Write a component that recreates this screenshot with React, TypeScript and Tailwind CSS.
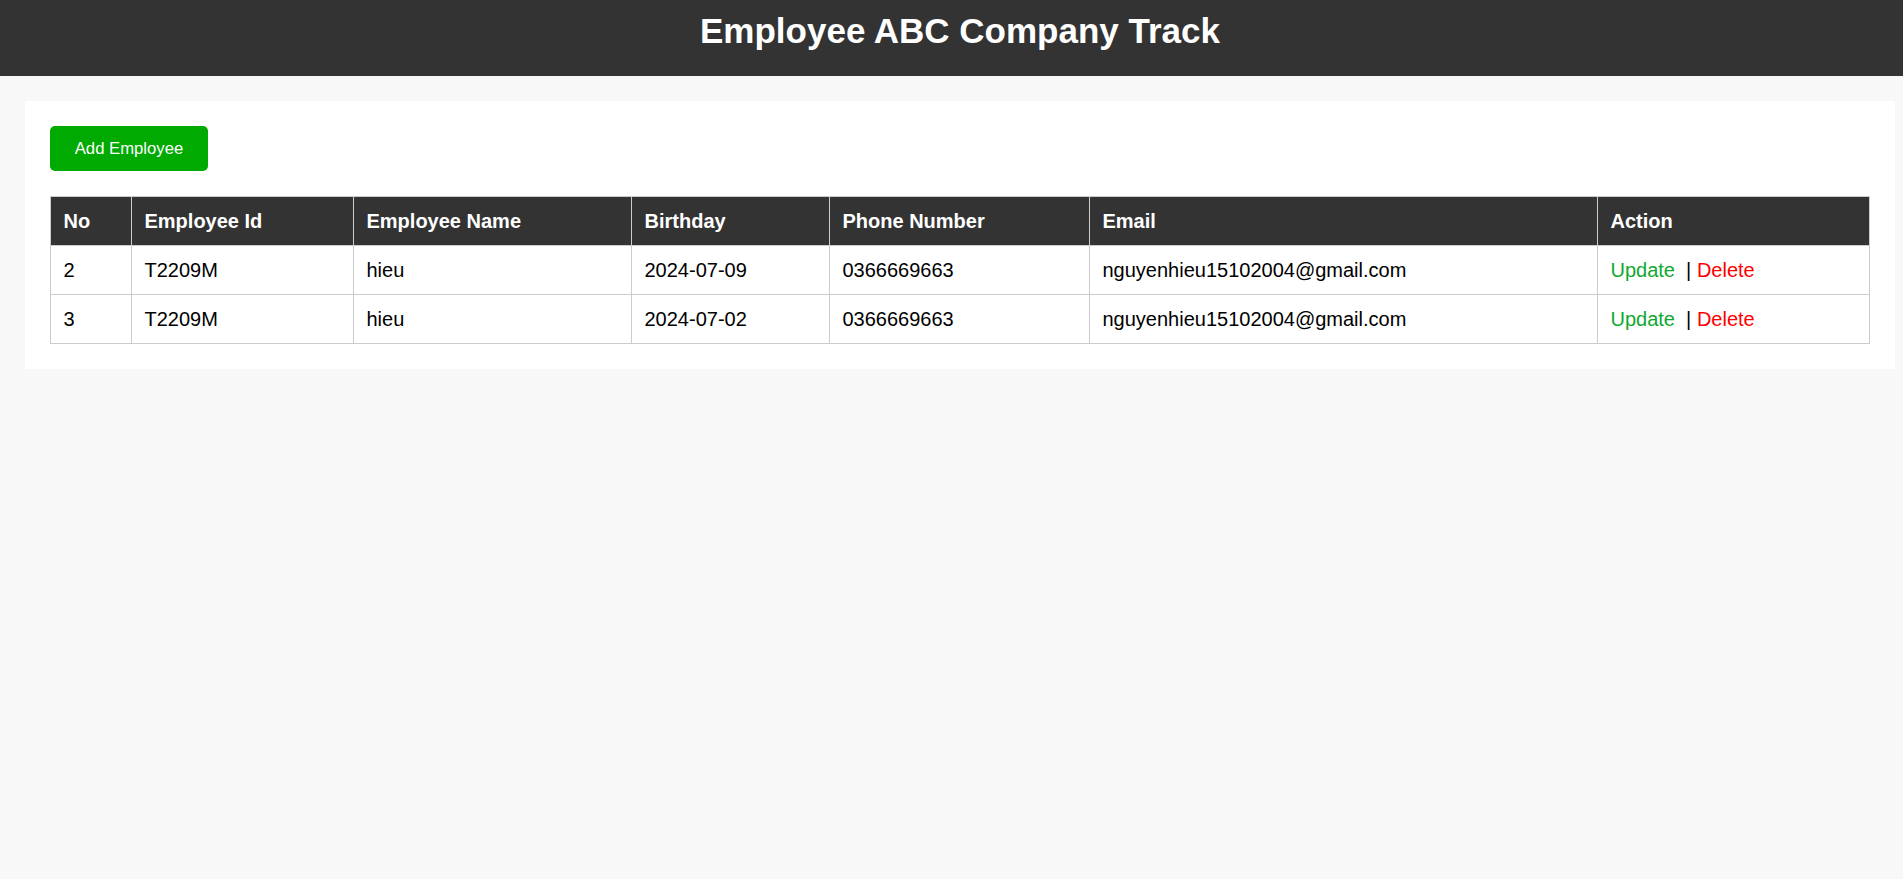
import React from 'react';

type Employee = {
  no: number;
  id: string;
  name: string;
  birthday: string;
  phone: string;
  email: string;
};

const employees: Employee[] = [
  {no: 2, id: 'T2209M', name: 'hieu', birthday: '2024-07-09', phone: '0366669663', email: 'nguyenhieu15102004@gmail.com'},
  {no: 3, id: 'T2209M', name: 'hieu', birthday: '2024-07-02', phone: '0366669663', email: 'nguyenhieu15102004@gmail.com'},
];

const columns = [
  {label: 'No', w: 'w-[81px]'},
  {label: 'Employee Id', w: 'w-[222px]'},
  {label: 'Employee Name', w: 'w-[278px]'},
  {label: 'Birthday', w: 'w-[198px]'},
  {label: 'Phone Number', w: 'w-[260px]'},
  {label: 'Email', w: 'w-[508px]'},
  {label: 'Action', w: 'w-[272px]'},
];

const cell = 'border border-[#cccccc] px-[12.5px] py-[12.5px] text-left leading-[23px]';

export default function App() {
  return (
    <div className="min-h-screen bg-[#f8f8f8] font-['Liberation_Sans',Arial,sans-serif] text-[20px] text-black">
      <header className="h-[76px] bg-[#333333] pl-[17px] pt-[11px] text-center">
        <h1 className="text-[35px] font-bold leading-[40px] text-white">Employee ABC Company Track</h1>
      </header>

      <main className="ml-[25px] mt-[25px] w-[1870px] bg-white p-[25px]">
        <button className="h-[45px] w-[158px] rounded-[5px] bg-[#00aa00] text-[16.7px] text-white">
          Add Employee
        </button>

        <table className="mt-[25px] w-[1819px] table-fixed border-collapse">
          <thead>
            <tr className="bg-[#333333] text-white">
              {columns.map((c) => (
                <th key={c.label} className={`${cell} ${c.w} font-bold`}>{c.label}</th>
              ))}
            </tr>
          </thead>
          <tbody>
            {employees.map((e) => (
              <tr key={e.no}>
                <td className={cell}>{e.no}</td>
                <td className={cell}>{e.id}</td>
                <td className={cell}>{e.name}</td>
                <td className={cell}>{e.birthday}</td>
                <td className={cell}>{e.phone}</td>
                <td className={cell}>{e.email}</td>
                <td className={cell}>
                  <a href="#" className="text-[#10a830]">Update</a>
                  &nbsp; | <a href="#" className="text-[#ff0000]">Delete</a>
                </td>
              </tr>
            ))}
          </tbody>
        </table>
      </main>
    </div>
  );
}
